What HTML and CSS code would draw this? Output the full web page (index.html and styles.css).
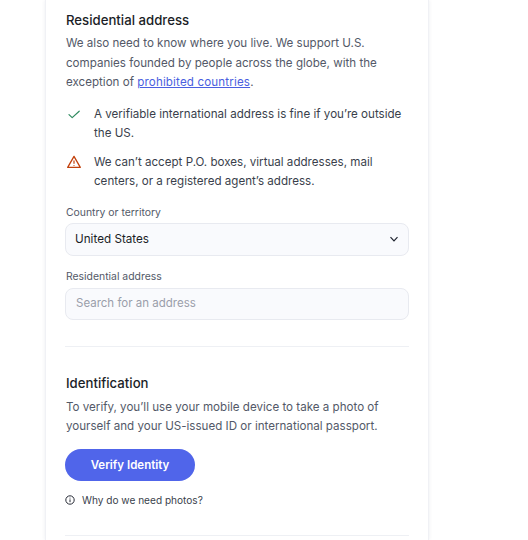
FILE: index.html
```html
<!DOCTYPE html>
<html lang="en">
<head>
    <meta charset="UTF-8">
    <title>Residential address</title>
    <link rel="stylesheet" href="styles.css">
</head>
<body>
    <div class="card">
        <section class="address">
            <h2>Residential address</h2>
            <p class="intro">We also need to know where you live. We support U.S. companies founded by people across the globe, with the exception of <a href="#">prohibited countries</a>.</p>
            <div class="note">
                <svg class="note-icon" width="16" height="16" viewBox="0 0 16 16" fill="none"><path d="M3 8.6 6.2 11.6 13.2 5.2" stroke="#2f8a5f" stroke-width="1.2" stroke-linecap="round" stroke-linejoin="round"/></svg>
                <span>A verifiable international address is fine if you’re outside the US.</span>
            </div>
            <div class="note">
                <svg class="note-icon" width="16" height="16" viewBox="0 0 16 16" fill="none"><path d="M8 2.4 14.3 13.4H1.7Z" stroke="#c2410c" stroke-width="1.3" stroke-linejoin="round"/><path d="M8 6.4V9.8M8 11.2V12" stroke="#c2410c" stroke-width="1.2"/></svg>
                <span>We can’t accept P.O. boxes, virtual addresses, mail centers, or a registered agent’s address.</span>
            </div>
            <label class="field-label">Country or territory</label>
            <div class="select">
                <span>United States</span>
                <svg width="10" height="10" viewBox="0 0 10 10" fill="none"><path d="M1.5 3.2 5 6.8 8.5 3.2" stroke="#1f2430" stroke-width="1.2"/></svg>
            </div>
            <label class="field-label second">Residential address</label>
            <input class="search" type="text" placeholder="Search for an address">
        </section>
        <section class="identity">
            <h2>Identification</h2>
            <p class="intro">To verify, you’ll use your mobile device to take a photo of yourself and your US-issued ID or international passport.</p>
            <button class="verify">Verify Identity</button>
            <div class="why">
                <svg width="10" height="10" viewBox="0 0 10 10" fill="none"><circle cx="5" cy="5" r="4.2" stroke="#272b36" stroke-width="1"/><path d="M5 4.4V7.2M5 2.7V3.5" stroke="#272b36" stroke-width="1"/></svg>
                <span>Why do we need photos?</span>
            </div>
        </section>
    </div>
</body>
</html>
```

FILE: styles.css
```css
* {
    margin: 0;
    padding: 0;
    box-sizing: border-box;
}
html, body {
    height: 540px;
    overflow: hidden;
}
body {
    background-color: #fff;
    font-family: Inter, "Liberation Sans", sans-serif;
    color: #272b36;
}
.card {
    width: 384px;
    height: 540px;
    margin-left: 45px;
    padding: 12px 19px 0;
    background-color: #fff;
    border-left: 1px solid #f0f1f5;
    border-right: 1px solid #f0f1f5;
    box-shadow: 0 0 4px rgba(30, 40, 80, .08);
}
h2 {
    padding-left: 1px;
    font-size: 13.2px;
    line-height: 17px;
    font-weight: 500;
    color: #1b1e27;
}
.intro {
    margin-top: 5px;
    padding-left: 1px;
    font-size: 11.6px;
    line-height: 19.5px;
    color: #535968;
}
.intro a {
    color: #4a5fe0;
    letter-spacing: .15px;
}
/* notes */
.note {
    display: flex;
    margin-top: 10px;
    font-size: 11.6px;
    line-height: 19px;
    color: #3a3f4c;
}
.intro + .note {
    margin-top: 12px;
}
.note-icon {
    flex: none;
    margin: 1px 12px 0 1px;
}
/* fields */
.field-label {
    display: block;
    margin-top: 15px;
    padding-left: 1px;
    font-size: 10.4px;
    line-height: 14px;
    color: #535968;
}
.field-label.second {
    margin-top: 14px;
}
.select, .search {
    width: 100%;
    border: 1px solid #e8eaf0;
    border-radius: 8px;
    background-color: #f9fafd;
    font-family: inherit;
}
.select {
    height: 33px;
    margin-top: 3px;
    padding: 0 9px;
    display: flex;
    align-items: center;
    justify-content: space-between;
    font-size: 11.7px;
    color: #1b1e27;
}
.search {
    height: 32px;
    margin-top: 4px;
    padding: 0 10px 1px;
    font-size: 11.5px;
    outline: none;
}
.search::placeholder {
    color: #9a9eaa;
}
.address {
    padding-bottom: 26px;
    border-bottom: 1px solid #eef0f4;
}
.identity {
    padding: 28px 0 28px;
    border-bottom: 1px solid #eef0f4;
}
.identity .intro {
    margin-top: 6px;
}
.verify {
    display: block;
    width: 130px;
    height: 32px;
    margin-top: 12px;
    border: none;
    border-radius: 16px;
    background-color: #5065ea;
    color: #fff;
    font-family: inherit;
    font-size: 11.5px;
    font-weight: 600;
}
.why {
    display: flex;
    align-items: center;
    gap: 7px;
    margin-top: 12px;
    font-size: 10.1px;
    line-height: 14px;
    color: #3a3f4c;
}
```
